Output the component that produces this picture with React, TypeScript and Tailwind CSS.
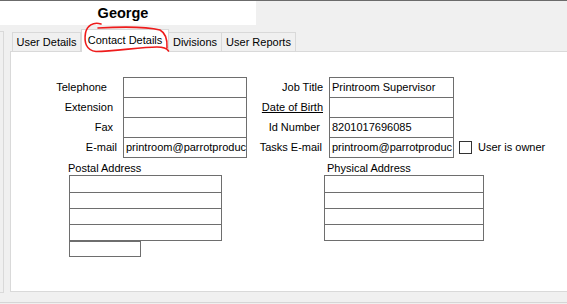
import React from "react";

const font = { fontFamily: '"Liberation Sans", Arial, sans-serif' };

function Box({ w, h, text, className = "" }: { w: string; h: string; text?: string; className?: string }) {
  return (
    <div
      className={`${w} ${h} ${className} shrink-0 bg-white border border-[#6e6e6e] overflow-hidden whitespace-nowrap pl-[2px] flex items-center text-[11px] text-black`}
    >
      {text}
    </div>
  );
}

type Row = {
  l1: string;
  pr1: string;
  v1?: string;
  l2: React.ReactNode;
  pr2: string;
  v2?: string;
  extra?: boolean;
};

const rows: Row[] = [
  { l1: "Telephone", pr1: "pr-[16px]", l2: "Job Title", pr2: "pr-[6px]", v2: "Printroom Supervisor" },
  { l1: "Extension", pr1: "pr-[10px]", l2: <span className="underline">Date of Birth</span>, pr2: "pr-[6px]" },
  { l1: "Fax", pr1: "pr-[10px]", l2: "Id Number", pr2: "pr-[9px]", v2: "8201017696085" },
  {
    l1: "E-mail",
    pr1: "pr-[6px]",
    v1: "printroom@parrotproduc",
    l2: "Tasks E-mail",
    pr2: "pr-[7px]",
    v2: "printroom@parrotproduc",
    extra: true,
  },
];

export default function App() {
  return (
    <div
      style={font}
      className="relative w-[567px] h-[304px] bg-[#f0f0f0] border-t border-[#6b6b6b] overflow-hidden text-black text-[11px]"
    >
      {/* header */}
      <div className="w-[256px] h-[24px] bg-white flex items-center justify-center pr-[10px]">
        <span className="text-[14.5px] font-bold leading-none">George</span>
      </div>

      {/* body */}
      <div className="flex mt-[4px]">
        <div className="w-[4px] h-[262px] mt-[2px] border-t border-r border-b border-[#d9d9d9] shrink-0" />
        <div className="ml-[6px] flex flex-col w-[570px] shrink-0">
          {/* tabs */}
          <div className="flex items-end h-[22px] pl-[2px] relative z-10">
            <div className="w-[69px] h-[19px] border-t border-l border-r border-[#d9d9d9] bg-[#f0f0f0] flex items-center justify-center">
              User Details
            </div>
            <div className="w-[88px] h-[23px] -mb-px border-t border-l border-r border-[#d9d9d9] bg-white flex items-center justify-center pb-[1px]">
              Contact Details
            </div>
            <div className="w-[53px] h-[19px] border-t border-r border-[#d9d9d9] bg-[#f0f0f0] flex items-center justify-center">
              Divisions
            </div>
            <div className="w-[74px] h-[19px] border-t border-r border-[#d9d9d9] bg-[#f0f0f0] flex items-center justify-center">
              User Reports
            </div>
          </div>

          {/* panel */}
          <div className="h-[241px] bg-white border border-[#d9d9d9] pt-[25px]">
            <div className="flex flex-col">
              {rows.map((r, i) => (
                <div key={i} className={`flex items-center h-[21px] ${i > 0 ? "-mt-px" : ""}`}>
                  <div className={`w-[112px] text-right ${r.pr1} whitespace-nowrap`}>{r.l1}</div>
                  <Box w="w-[124px]" h="h-[21px]" text={r.v1} />
                  <div className={`w-[82px] text-right ${r.pr2} whitespace-nowrap`}>{r.l2}</div>
                  <Box w="w-[125px]" h="h-[21px]" text={r.v2} />
                  {r.extra && (
                    <div className="flex items-center ml-[5px]">
                      <div className="w-[13px] h-[13px] border border-[#333333] bg-white -mt-[1px]" />
                      <span className="ml-[6px] whitespace-nowrap">User is owner</span>
                    </div>
                  )}
                </div>
              ))}
            </div>

            {/* addresses */}
            <div className="flex mt-[3px]">
              <div className="ml-[58px] w-[153px] flex flex-col">
                <div className="h-[14px] leading-[14px] -ml-px whitespace-nowrap">Postal Address</div>
                <Box w="w-[153px]" h="h-[18px]" />
                <Box w="w-[153px]" h="h-[17px]" className="-mt-px" />
                <Box w="w-[153px]" h="h-[17px]" className="-mt-px" />
                <Box w="w-[153px]" h="h-[17px]" className="-mt-px" />
                <Box w="w-[72px]" h="h-[16px]" />
              </div>
              <div className="ml-[102px] w-[160px] flex flex-col">
                <div className="h-[14px] leading-[14px] ml-[3px] whitespace-nowrap">Physical Address</div>
                <Box w="w-[160px]" h="h-[18px]" />
                <Box w="w-[160px]" h="h-[17px]" className="-mt-px" />
                <Box w="w-[160px]" h="h-[17px]" className="-mt-px" />
                <Box w="w-[160px]" h="h-[17px]" className="-mt-px" />
              </div>
            </div>
          </div>
        </div>
      </div>

      {/* bottom line */}
      <div className="mt-[9px] h-px bg-[#d6d6d6]" />

      {/* red annotation scribble */}
      <svg
        className="absolute left-0 top-0 pointer-events-none z-20"
        width="567"
        height="304"
        viewBox="0 0 567 304"
        fill="none"
      >
        <path
          d="M101 23 C93 20.5 87 25 85.5 32 C84 41 86 49.5 96 50.5 C115 50.5 140 46 157 46 C164 46 167 47.5 168.5 50 M167 47 C167.5 39 165.5 32 160 29 C146 25.5 116 26 98 27"
          stroke="#ee1c1c"
          strokeWidth="1.6"
          strokeLinecap="round"
        />
      </svg>
    </div>
  );
}
